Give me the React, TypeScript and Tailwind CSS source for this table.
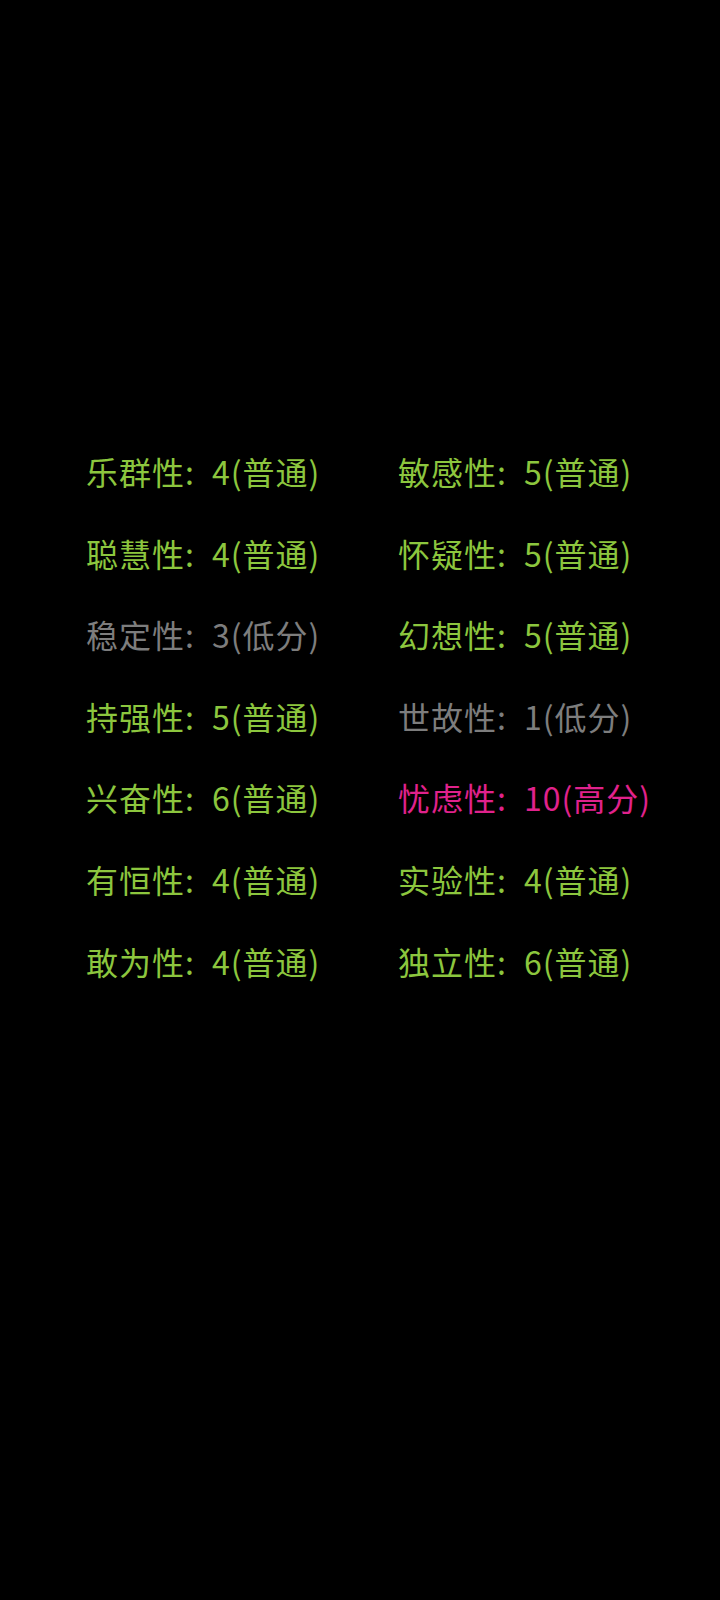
const rows: { label: string; score: string; level: "low" | "mid" | "high" }[][] = [
  [
    { label: "乐群性", score: "4", level: "mid" },
    { label: "敏感性", score: "5", level: "mid" },
  ],
  [
    { label: "聪慧性", score: "4", level: "mid" },
    { label: "怀疑性", score: "5", level: "mid" },
  ],
  [
    { label: "稳定性", score: "3", level: "low" },
    { label: "幻想性", score: "5", level: "mid" },
  ],
  [
    { label: "持强性", score: "5", level: "mid" },
    { label: "世故性", score: "1", level: "low" },
  ],
  [
    { label: "兴奋性", score: "6", level: "mid" },
    { label: "忧虑性", score: "10", level: "high" },
  ],
  [
    { label: "有恒性", score: "4", level: "mid" },
    { label: "实验性", score: "4", level: "mid" },
  ],
  [
    { label: "敢为性", score: "4", level: "mid" },
    { label: "独立性", score: "6", level: "mid" },
  ],
];

const levelText = { low: "低分", mid: "普通", high: "高分" };
const levelColor = {
  low: "text-[#7d7d7d]",
  mid: "text-[#8cc63e]",
  high: "text-[#e0228c]",
};

export default function App() {
  return (
    <div
      className="w-[720px] min-h-[1600px] bg-black pt-[439px] pl-[86px]"
      style={{ fontFamily: "'Noto Sans CJK SC', 'Noto Sans', sans-serif" }}
    >
      <div className="flex flex-col">
        {rows.map((pair, i) => (
          <div key={i} className="flex h-[81.6px] items-start">
            {pair.map((f) => (
              <p
                key={f.label}
                className={`w-[312px] text-[32px] leading-[64px] tracking-[1px] whitespace-nowrap ${levelColor[f.level]}`}
              >
                {f.label}:{"\u2002"}{f.score}({levelText[f.level]})
              </p>
            ))}
          </div>
        ))}
      </div>
    </div>
  );
}
